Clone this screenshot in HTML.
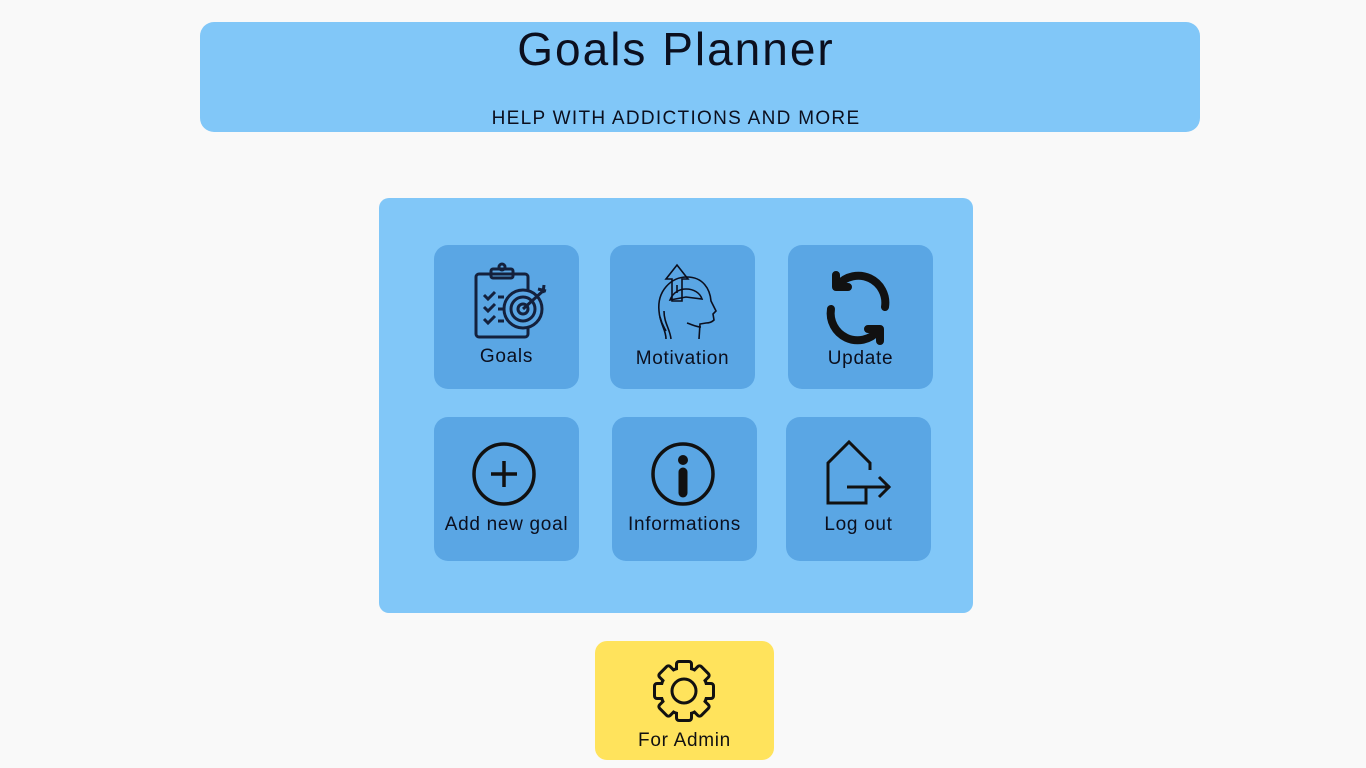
<!DOCTYPE html>
<html><head><meta charset="utf-8"><style>
body{margin:0;width:1366px;height:768px;background:#f9f9f9;font-family:"Liberation Sans",sans-serif;position:relative;overflow:hidden;color:#111}
.hdr{position:absolute;left:200px;top:22px;width:1000px;height:110px;background:#81c7f8;border-radius:14px}
.t1{position:absolute;left:0;width:952px;top:1px;text-align:center;font-size:46px;line-height:52px;color:#0b0f1e;letter-spacing:2px}
.t2{position:absolute;left:0;width:952px;top:86px;text-align:center;font-size:19px;color:#0b0f1e;letter-spacing:1.3px}
.panel{position:absolute;left:379px;top:198px;width:594px;height:415px;background:#81c7f8;border-radius:10px}
.b{position:absolute;width:145px;height:144px;background:#5aa6e4;border-radius:14px}
.b span{position:absolute;left:0;right:0;text-align:center;font-size:19px;color:#0b0f1e;letter-spacing:0.7px}
.b svg{position:absolute;left:0;top:0}
.adm{position:absolute;left:595px;top:641px;width:179px;height:119px;background:#ffe35c;border-radius:12px}
</style></head><body>
<div class="hdr"><div class="t1">Goals Planner</div><div class="t2">HELP WITH ADDICTIONS AND MORE</div></div>
<div class="panel"></div>

<div class="b" style="left:434px;top:245px"><svg width="145" height="144" fill="none" stroke="#14213d" stroke-width="3">
<rect x="42" y="29" width="52" height="63" rx="3"/><rect x="57" y="24" width="22" height="9" rx="2"/><circle cx="68" cy="22" r="3"/>
<path d="M50 50l4 4 7-7M50 62l4 4 7-7M50 74l4 4 7-7"/>
<circle cx="89" cy="64" r="19" fill="#5aa6e4"/><circle cx="89" cy="64" r="12"/><circle cx="89" cy="64" r="5"/><path d="M89 64l20-18M104 44l8 2M110 40l-1 8"/>
<path d="M64 52h6M64 64h6M64 76h6"/></svg><span style="top:101px">Goals</span></div>

<div class="b" style="left:610px;top:245px"><svg width="145" height="144" fill="none" stroke="#0b0f1e" stroke-width="1.6">
<path d="M56 94c0-10-6-14-7-28-2-20 12-34 28-34 16 0 23 12 24 24l5 10-3 3 1 6c-2 2-4 3-8 3l-6 1-1 15"/>
<path d="M61 94c-1-10-7-16-7-28"/><path d="M60 55c3-8 10-11 16-11 8 0 14 4 16 10l-16-2z"/>
<path d="M62 47V34h-6l11-14 11 14h-6v22H62z"/><path d="M67 40v8M50 72c2 8 4 10 6 14M77 78c6 2 10 4 14 4"/></svg><span style="top:103px">Motivation</span></div>

<div class="b" style="left:788px;top:245px"><svg width="145" height="144" fill="none" stroke="#111" stroke-width="8" stroke-linecap="round" stroke-linejoin="round">
<path d="M97 62A27 27 0 0 0 50 40"/><path d="M43 64A27 27 0 0 0 90 86"/><path d="M48 30v12h12M92 96V84H80"/></svg><span style="top:103px">Update</span></div>

<div class="b" style="left:434px;top:417px"><svg width="145" height="144" fill="none" stroke="#111" stroke-width="3.5">
<circle cx="70" cy="57" r="30"/><path d="M70 44v26M57 57h26"/></svg><span style="top:97px">Add new goal</span></div>

<div class="b" style="left:612px;top:417px"><svg width="145" height="144" fill="none" stroke="#111" stroke-width="3.5">
<circle cx="71" cy="57" r="30"/><circle cx="71" cy="43" r="5" fill="#111" stroke="none"/><path d="M71 55v21" stroke-width="9" stroke-linecap="round"/></svg><span style="top:97px">Informations</span></div>

<div class="b" style="left:786px;top:417px"><svg width="145" height="144" fill="none" stroke="#111" stroke-width="3">
<path d="M80 70v16H42V46l21-21 21 21v7"/><path d="M61 70h43M93 60l10 10-10 10"/></svg><span style="top:97px">Log out</span></div>

<div class="adm"><svg width="179" height="119" style="position:absolute;left:0;top:0">
<g transform="translate(89,50)" stroke="#111" stroke-width="6" fill="#111">
<circle r="22"/><g id="t"><rect x="-6" y="-28" width="12" height="10" rx="1"/></g>
<use href="#t" transform="rotate(45)"/><use href="#t" transform="rotate(90)"/><use href="#t" transform="rotate(135)"/><use href="#t" transform="rotate(180)"/><use href="#t" transform="rotate(225)"/><use href="#t" transform="rotate(270)"/><use href="#t" transform="rotate(315)"/></g>
<g transform="translate(89,50)" fill="#ffe35c">
<circle r="22"/><g id="u"><rect x="-6" y="-28" width="12" height="10" rx="1"/></g>
<use href="#u" transform="rotate(45)"/><use href="#u" transform="rotate(90)"/><use href="#u" transform="rotate(135)"/><use href="#u" transform="rotate(180)"/><use href="#u" transform="rotate(225)"/><use href="#u" transform="rotate(270)"/><use href="#u" transform="rotate(315)"/>
<circle r="12" fill="none" stroke="#111" stroke-width="3"/></g></svg>
<span style="position:absolute;left:0;right:0;top:89px;text-align:center;font-size:19px;color:#111;letter-spacing:0.7px">For Admin</span></div>
</body></html>
